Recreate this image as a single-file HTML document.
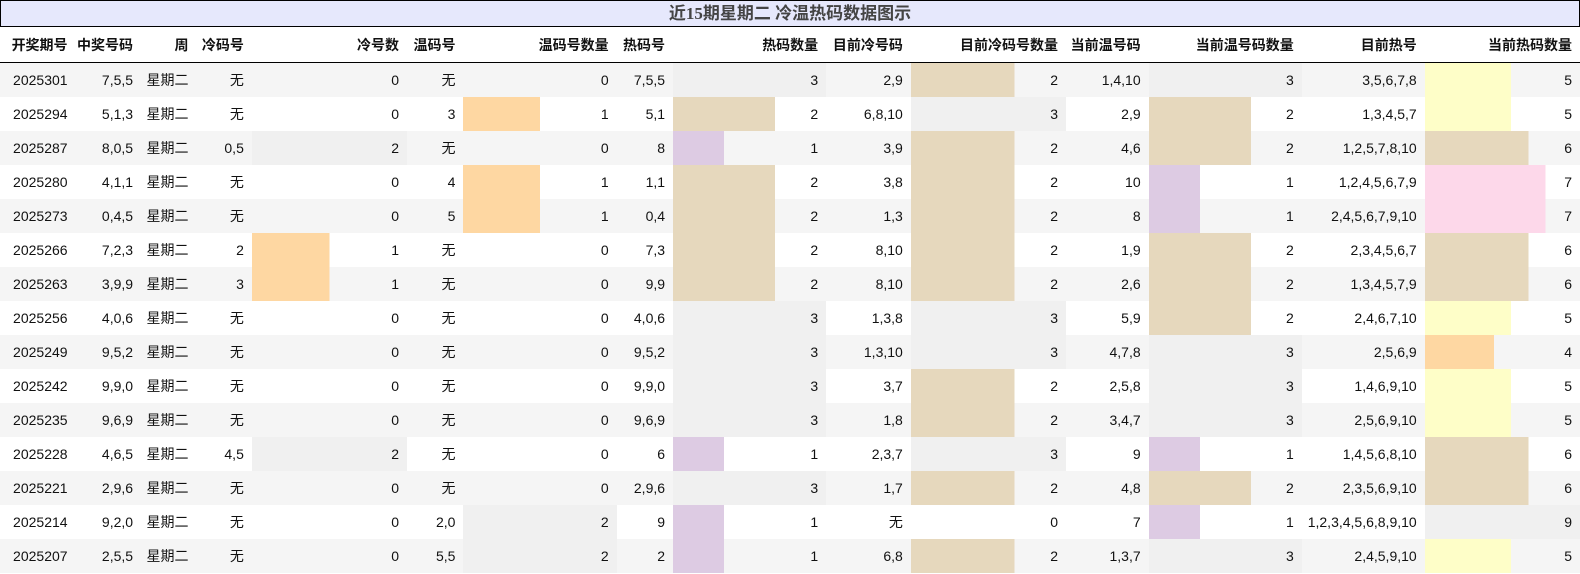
<!DOCTYPE html>
<html><head><meta charset="utf-8"><style>
body{margin:0;background:#fff;font-family:"Liberation Sans","Noto Sans CJK SC",sans-serif;font-size:14px;color:#111;width:1580px;height:574px;overflow:hidden}
.t{height:25px;border:1px solid #000;background:#e6e8fc;text-align:center;font:bold 17px "Liberation Serif","Noto Sans CJK SC",serif;color:#444;line-height:25px}
table{border-collapse:collapse;table-layout:fixed;width:1580px}
td,th{padding:0 8px 0 0;text-align:right;white-space:nowrap;overflow:hidden}
th{height:35px;font-weight:bold;border-bottom:1px solid #000}
td{height:34px}
tbody tr:nth-child(odd){background:#f5f5f5}
.a{background:linear-gradient(90deg,#fed7a2 50%,transparent 50%)}
.g{background:#f0f0f0}
.p{background:linear-gradient(90deg,#ddcbe3 33.3%,transparent 33.3%)}
.tt{background:linear-gradient(90deg,#e6d8bd 66.7%,transparent 66.7%)}
.h4{background:linear-gradient(90deg,#fed7a2 44.4%,transparent 44.4%)}
.h5{background:linear-gradient(90deg,#fefec8 55.6%,transparent 55.6%)}
.h6{background:linear-gradient(90deg,#e6d8bd 66.7%,transparent 66.7%)}
.h7{background:linear-gradient(90deg,#fdd8ea 77.8%,transparent 77.8%)}
</style></head><body>
<div class="t">近15期星期二 冷温热码数据图示</div>
<table>
<colgroup><col style="width:75px"><col style="width:65px"><col style="width:55px"><col style="width:55px"><col style="width:154px"><col style="width:56px"><col style="width:152px"><col style="width:56px"><col style="width:152px"><col style="width:84px"><col style="width:154px"><col style="width:82px"><col style="width:152px"><col style="width:122px"><col style="width:154px"></colgroup>
<thead><tr><th>开奖期号</th><th>中奖号码</th><th>周</th><th>冷码号</th><th>冷号数</th><th>温码号</th><th>温码号数量</th><th>热码号</th><th>热码数量</th><th>目前冷号码</th><th>目前冷码号数量</th><th>当前温号码</th><th>当前温号码数量</th><th>目前热号</th><th>当前热码数量</th></tr></thead>
<tbody>
<tr><td>2025301</td><td>7,5,5</td><td>星期二</td><td>无</td><td>0</td><td>无</td><td>0</td><td>7,5,5</td><td class="g">3</td><td>2,9</td><td class="tt">2</td><td>1,4,10</td><td class="g">3</td><td>3,5,6,7,8</td><td class="h5">5</td></tr>
<tr><td>2025294</td><td>5,1,3</td><td>星期二</td><td>无</td><td>0</td><td>3</td><td class="a">1</td><td>5,1</td><td class="tt">2</td><td>6,8,10</td><td class="g">3</td><td>2,9</td><td class="tt">2</td><td>1,3,4,5,7</td><td class="h5">5</td></tr>
<tr><td>2025287</td><td>8,0,5</td><td>星期二</td><td>0,5</td><td class="g">2</td><td>无</td><td>0</td><td>8</td><td class="p">1</td><td>3,9</td><td class="tt">2</td><td>4,6</td><td class="tt">2</td><td>1,2,5,7,8,10</td><td class="h6">6</td></tr>
<tr><td>2025280</td><td>4,1,1</td><td>星期二</td><td>无</td><td>0</td><td>4</td><td class="a">1</td><td>1,1</td><td class="tt">2</td><td>3,8</td><td class="tt">2</td><td>10</td><td class="p">1</td><td>1,2,4,5,6,7,9</td><td class="h7">7</td></tr>
<tr><td>2025273</td><td>0,4,5</td><td>星期二</td><td>无</td><td>0</td><td>5</td><td class="a">1</td><td>0,4</td><td class="tt">2</td><td>1,3</td><td class="tt">2</td><td>8</td><td class="p">1</td><td>2,4,5,6,7,9,10</td><td class="h7">7</td></tr>
<tr><td>2025266</td><td>7,2,3</td><td>星期二</td><td>2</td><td class="a">1</td><td>无</td><td>0</td><td>7,3</td><td class="tt">2</td><td>8,10</td><td class="tt">2</td><td>1,9</td><td class="tt">2</td><td>2,3,4,5,6,7</td><td class="h6">6</td></tr>
<tr><td>2025263</td><td>3,9,9</td><td>星期二</td><td>3</td><td class="a">1</td><td>无</td><td>0</td><td>9,9</td><td class="tt">2</td><td>8,10</td><td class="tt">2</td><td>2,6</td><td class="tt">2</td><td>1,3,4,5,7,9</td><td class="h6">6</td></tr>
<tr><td>2025256</td><td>4,0,6</td><td>星期二</td><td>无</td><td>0</td><td>无</td><td>0</td><td>4,0,6</td><td class="g">3</td><td>1,3,8</td><td class="g">3</td><td>5,9</td><td class="tt">2</td><td>2,4,6,7,10</td><td class="h5">5</td></tr>
<tr><td>2025249</td><td>9,5,2</td><td>星期二</td><td>无</td><td>0</td><td>无</td><td>0</td><td>9,5,2</td><td class="g">3</td><td>1,3,10</td><td class="g">3</td><td>4,7,8</td><td class="g">3</td><td>2,5,6,9</td><td class="h4">4</td></tr>
<tr><td>2025242</td><td>9,9,0</td><td>星期二</td><td>无</td><td>0</td><td>无</td><td>0</td><td>9,9,0</td><td class="g">3</td><td>3,7</td><td class="tt">2</td><td>2,5,8</td><td class="g">3</td><td>1,4,6,9,10</td><td class="h5">5</td></tr>
<tr><td>2025235</td><td>9,6,9</td><td>星期二</td><td>无</td><td>0</td><td>无</td><td>0</td><td>9,6,9</td><td class="g">3</td><td>1,8</td><td class="tt">2</td><td>3,4,7</td><td class="g">3</td><td>2,5,6,9,10</td><td class="h5">5</td></tr>
<tr><td>2025228</td><td>4,6,5</td><td>星期二</td><td>4,5</td><td class="g">2</td><td>无</td><td>0</td><td>6</td><td class="p">1</td><td>2,3,7</td><td class="g">3</td><td>9</td><td class="p">1</td><td>1,4,5,6,8,10</td><td class="h6">6</td></tr>
<tr><td>2025221</td><td>2,9,6</td><td>星期二</td><td>无</td><td>0</td><td>无</td><td>0</td><td>2,9,6</td><td class="g">3</td><td>1,7</td><td class="tt">2</td><td>4,8</td><td class="tt">2</td><td>2,3,5,6,9,10</td><td class="h6">6</td></tr>
<tr><td>2025214</td><td>9,2,0</td><td>星期二</td><td>无</td><td>0</td><td>2,0</td><td class="g">2</td><td>9</td><td class="p">1</td><td>无</td><td>0</td><td>7</td><td class="p">1</td><td>1,2,3,4,5,6,8,9,10</td><td class="g">9</td></tr>
<tr><td>2025207</td><td>2,5,5</td><td>星期二</td><td>无</td><td>0</td><td>5,5</td><td class="g">2</td><td>2</td><td class="p">1</td><td>6,8</td><td class="tt">2</td><td>1,3,7</td><td class="g">3</td><td>2,4,5,9,10</td><td class="h5">5</td></tr>
</tbody></table>
</body></html>
